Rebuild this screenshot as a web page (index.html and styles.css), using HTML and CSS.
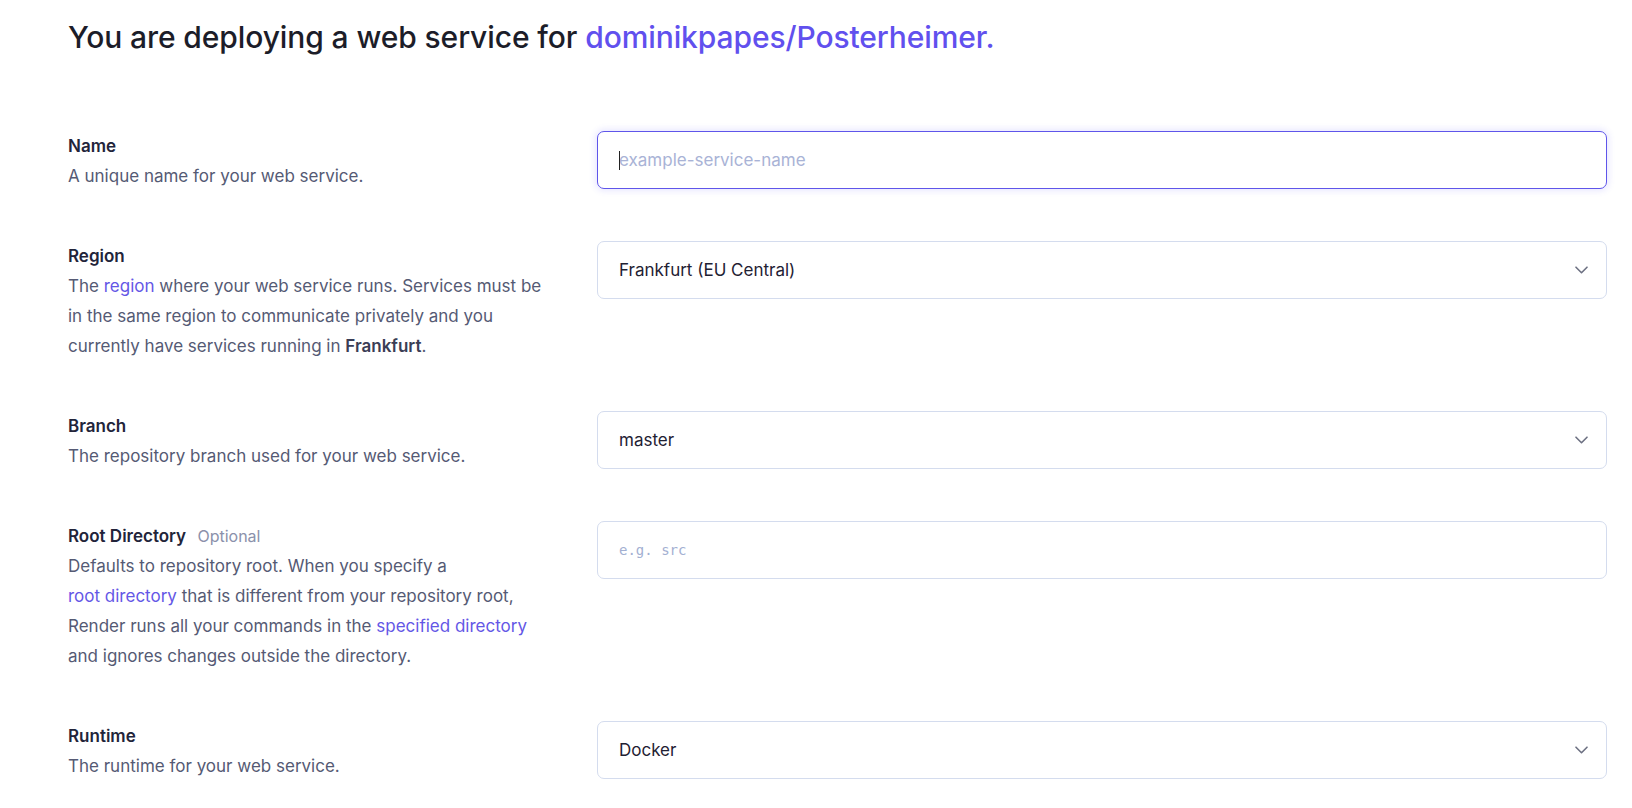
FILE: index.html
```html
<!DOCTYPE html>
<html lang="en">
<head>
<meta charset="utf-8">
<title>Deploy web service</title>
<link rel="stylesheet" href="styles.css">
</head>
<body>
<main class="page">
  <h1 class="title">You are deploying a web service for <span class="repo">dominikpapes/Posterheimer.</span></h1>

  <div class="form">
    <div class="field">
      <div class="info">
        <div class="label">Name</div>
        <div class="desc">A unique name for your web service.</div>
      </div>
      <div class="control">
        <div class="input focused"><span class="caret"></span><span class="placeholder">example-service-name</span></div>
      </div>
    </div>

    <div class="field">
      <div class="info">
        <div class="label">Region</div>
        <div class="desc">The <a class="link" href="#">region</a> where your web service runs. Services must be in the same region to communicate privately and you currently have services running in <strong class="strong">Frankfurt</strong>.</div>
      </div>
      <div class="control">
        <div class="input select"><span class="value">Frankfurt (EU Central)</span>
          <svg class="chevron" width="13" height="8" viewBox="0 0 13 8"><path d="M1 1.2l5.5 5.5 5.5-5.5" fill="none" stroke="#6d7183" stroke-width="1.6" stroke-linecap="round" stroke-linejoin="round"/></svg>
        </div>
      </div>
    </div>

    <div class="field">
      <div class="info">
        <div class="label">Branch</div>
        <div class="desc">The repository branch used for your web service.</div>
      </div>
      <div class="control">
        <div class="input select"><span class="value">master</span>
          <svg class="chevron" width="13" height="8" viewBox="0 0 13 8"><path d="M1 1.2l5.5 5.5 5.5-5.5" fill="none" stroke="#6d7183" stroke-width="1.6" stroke-linecap="round" stroke-linejoin="round"/></svg>
        </div>
      </div>
    </div>

    <div class="field">
      <div class="info">
        <div class="label">Root Directory <span class="optional">Optional</span></div>
        <div class="desc">Defaults to repository root. When you specify a <a class="link" href="#">root directory</a> that is different from your repository root, Render runs all your commands in the <a class="link" href="#">specified directory</a> and ignores changes outside the directory.</div>
      </div>
      <div class="control">
        <div class="input"><span class="placeholder mono">e.g. src</span></div>
      </div>
    </div>

    <div class="field">
      <div class="info">
        <div class="label">Runtime</div>
        <div class="desc">The runtime for your web service.</div>
      </div>
      <div class="control">
        <div class="input select"><span class="value">Docker</span>
          <svg class="chevron" width="13" height="8" viewBox="0 0 13 8"><path d="M1 1.2l5.5 5.5 5.5-5.5" fill="none" stroke="#6d7183" stroke-width="1.6" stroke-linecap="round" stroke-linejoin="round"/></svg>
        </div>
      </div>
    </div>
  </div>
</main>
</body>
</html>
```

FILE: styles.css
```css
* { box-sizing: border-box; }
html, body { margin: 0; background: #ffffff; }
body {
  font-family: Inter, "Noto Sans", sans-serif;
  color: #1e2030;
  overflow: hidden;
}
.page {
  padding: 18px 25px 0 68px;
}
.title {
  margin: 0;
  font-size: 30px;
  line-height: 38px;
  font-weight: 500;
  color: #1c1d29;
  letter-spacing: -0.1px;
}
.repo { color: #6150ee; }
.form {
  margin-top: 75px;
  display: flex;
  flex-direction: column;
  gap: 50px;
}
.field {
  display: grid;
  grid-template-columns: 486px 1fr;
  column-gap: 43px;
  align-items: start;
}
.label {
  font-size: 17px;
  line-height: 30px;
  font-weight: 600;
  color: #22243a;
}
.optional {
  font-size: 16px;
  font-weight: 400;
  color: #8b91ab;
  margin-left: 7px;
}
.desc {
  font-size: 17px;
  line-height: 30px;
  color: #555a74;
}
.link { color: #6457e6; text-decoration: none; white-space: nowrap; }
.strong { font-weight: 600; color: #3a3d55; }
.control { display: flex; flex-direction: column; }
.input {
  position: relative;
  height: 58px;
  border: 1px solid #d4dcee;
  border-radius: 7px;
  background: #fff;
  display: flex;
  align-items: center;
  padding: 0 18px 0 21px;
}
.input.focused {
  border-color: #5f55ea;
  box-shadow: 0 0 6px 2px rgba(99, 92, 255, 0.14);
}
.caret {
  position: absolute;
  left: 21px;
  top: 19px;
  width: 1px;
  height: 19px;
  background: #222;
}
.placeholder {
  font-size: 17px;
  color: #a9b3d6;
}
.placeholder.mono {
  font-family: "DejaVu Sans Mono", monospace;
  font-size: 14px;
  color: #a3b0d2;
}
.select { justify-content: space-between; }
.value {
  font-size: 17px;
  color: #1f2133;
}
.chevron { flex: none; }
```
